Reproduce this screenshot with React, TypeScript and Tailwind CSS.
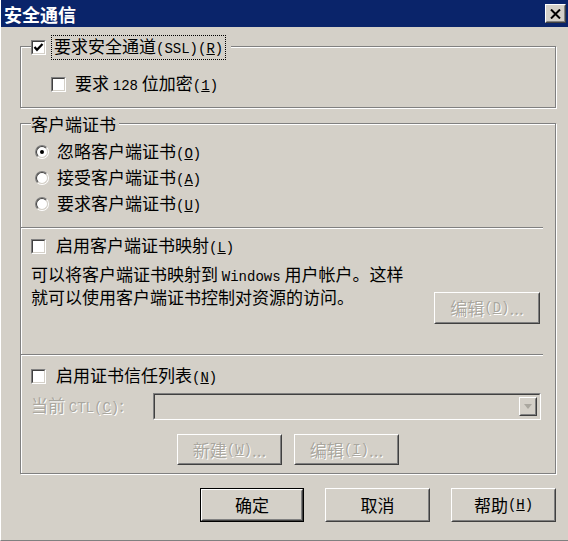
import React from "react";

const cjk = "font-['Noto_Sans_CJK_SC','Noto_Sans',sans-serif]";

function Latin({ children }: { children: React.ReactNode }) {
  return <span className="font-['Liberation_Mono',monospace] text-[14px]">{children}</span>;
}

function Key({ k }: { k: string }) {
  return (
    <Latin>
      (<u>{k}</u>)
    </Latin>
  );
}

function CheckBox({ checked }: { checked?: boolean }) {
  return (
    <span className="inline-block w-[15px] h-[15px] shrink-0 border border-t-[#808080] border-l-[#808080] border-r-white border-b-white">
      <span className="flex items-center justify-center w-full h-full bg-white border border-t-[#404040] border-l-[#404040] border-r-[#d4d0c8] border-b-[#d4d0c8]">
        {checked && (
          <svg width="11" height="11" viewBox="0 0 11 11">
            <path d="M1.5 5 L4 7.8 L9.5 2" fill="none" stroke="#000" strokeWidth="2.2" />
          </svg>
        )}
      </span>
    </span>
  );
}

function Radio({ checked }: { checked?: boolean }) {
  return (
    <span className="inline-block w-[14px] h-[14px] shrink-0 rounded-full border border-t-[#808080] border-l-[#808080] border-r-white border-b-white">
      <span className="flex items-center justify-center w-full h-full rounded-full bg-white border border-t-[#404040] border-l-[#404040] border-r-[#d4d0c8] border-b-[#d4d0c8]">
        {checked && <span className="block w-[4px] h-[4px] rounded-full bg-black" />}
      </span>
    </span>
  );
}

function Btn({
  children,
  className,
  disabled,
}: {
  children: React.ReactNode;
  className: string;
  disabled?: boolean;
}) {
  return (
    <div className={`${className} border border-t-white border-l-white border-r-[#404040] border-b-[#404040] bg-[#d4d0c8]`}>
      <div
        className={`w-full h-full flex items-center justify-center border border-t-[#d4d0c8] border-l-[#d4d0c8] border-r-[#808080] border-b-[#808080] ${
          disabled ? "text-[#aaa79f] [text-shadow:1px_1px_0_#fff]" : "text-black"
        }`}
      >
        {children}
      </div>
    </div>
  );
}

function Etch() {
  return <div className="w-[522px] h-[2px] border-t border-t-[#808080] border-b border-b-white" />;
}

export default function App() {
  return (
    <div className={`w-[568px] h-[541px] bg-[#d4d0c8] border-l border-l-white border-b border-b-[#808080] flex flex-col ${cjk} text-[17px] leading-[20px] text-black overflow-hidden`}>
      {/* title bar */}
      <div className="h-[27px] bg-[#0a246a] flex items-center justify-between pl-[3px] pr-[2px]">
        <span className="text-white font-bold text-[18px] leading-[22px]">安全通信</span>
        <div className="w-[21px] h-[19px] border border-t-white border-l-white border-r-[#404040] border-b-[#404040] bg-[#d4d0c8]">
          <div className="w-full h-full flex items-center justify-center border border-t-[#d4d0c8] border-l-[#d4d0c8] border-r-[#808080] border-b-[#808080]">
            <svg width="11" height="10" viewBox="0 0 11 10">
              <path d="M1 0.5 L10 9.5 M10 0.5 L1 9.5" stroke="#000" strokeWidth="2" />
            </svg>
          </div>
        </div>
      </div>

      <div className="flex flex-col pl-[19px] pr-[12px]">
        {/* group 1 */}
        <div className="relative mt-[19px] h-[62px] border border-[#808080] shadow-[1px_1px_0_#fff,inset_1px_1px_0_#fff]">
          <div className="absolute left-[10px] -top-[12px] h-[24px] flex items-center gap-[5px] bg-[#d4d0c8] pr-[5px]">
            <CheckBox checked />
            <span className="border border-dotted border-black px-[2px] leading-[20px]">
              要求安全通道<Latin>(SSL)</Latin>
              <Key k="R" />
            </span>
          </div>
          <div className="flex items-center gap-[9px] pl-[30px] pt-[26px] h-[48px]">
            <CheckBox />
            <span>
              要求 <Latin>128</Latin> 位加密<Key k="1" />
            </span>
          </div>
        </div>

        {/* group 2 */}
        <div className="relative mt-[15px] h-[351px] border border-[#808080] shadow-[1px_1px_0_#fff,inset_1px_1px_0_#fff] flex flex-col">
          <div className="absolute left-[10px] -top-[11px] h-[22px] flex items-center bg-[#d4d0c8] pr-[3px]">
            <span>客户端证书</span>
          </div>

          <div className="h-[103px] pt-[15px] pl-[14px] flex flex-col">
            <div className="h-[26px] flex items-center gap-[8px]">
              <Radio checked />
              <span>忽略客户端证书<Key k="O" /></span>
            </div>
            <div className="h-[26px] flex items-center gap-[8px]">
              <Radio />
              <span>接受客户端证书<Key k="A" /></span>
            </div>
            <div className="h-[26px] flex items-center gap-[8px]">
              <Radio />
              <span>要求客户端证书<Key k="U" /></span>
            </div>
          </div>
          <Etch />

          <div className="h-[125px] flex flex-col pl-[10px] pr-[15px]">
            <div className="mt-[7px] h-[20px] flex items-center gap-[10px]">
              <CheckBox />
              <span>启用客户端证书映射<Key k="L" /></span>
            </div>
            <div className="mt-[8px] flex items-start justify-between">
              <p className="leading-[20px]">
                可以将客户端证书映射到 <Latin>Windows</Latin> 用户帐户。这样
                <br />
                就可以使用客户端证书控制对资源的访问。
              </p>
              <Btn className="w-[106px] h-[32px] mt-[28px]" disabled>
                编辑<Key k="D" />...
              </Btn>
            </div>
          </div>
          <Etch />

          <div className="flex flex-col pl-[10px]">
            <div className="mt-[10px] h-[20px] flex items-center gap-[10px]">
              <CheckBox />
              <span>启用证书信任列表<Key k="N" /></span>
            </div>
            <div className="mt-[7px] h-[27px] flex items-center justify-between pr-[14px]">
              <span className="text-[#aaa79f] [text-shadow:1px_1px_0_#fff]">
                当前 <Latin>CTL</Latin>
                <Key k="C" />:
              </span>
              <div className="w-[388px] h-[27px] border border-t-[#808080] border-l-[#808080] border-r-white border-b-white">
                <div className="w-full h-full flex items-center justify-end pr-[2px] border border-t-[#404040] border-l-[#404040] border-r-[#d4d0c8] border-b-[#d4d0c8]">
                  <div className="w-[18px] h-[19px] border border-t-white border-l-white border-r-[#404040] border-b-[#404040]">
                    <div className="w-full h-full flex items-center justify-center border border-t-[#d4d0c8] border-l-[#d4d0c8] border-r-[#808080] border-b-[#808080]">
                      <svg width="8" height="5" viewBox="0 0 8 5">
                        <path d="M0 0 H8 L4 5 Z" fill="#aaa79f" />
                      </svg>
                    </div>
                  </div>
                </div>
              </div>
            </div>
            <div className="mt-[14px] flex justify-center gap-[12px] pr-[10px]">
              <Btn className="w-[105px] h-[31px]" disabled>
                新建<Key k="W" />...
              </Btn>
              <Btn className="w-[105px] h-[31px]" disabled>
                编辑<Key k="I" />...
              </Btn>
            </div>
          </div>
        </div>

        {/* bottom buttons */}
        <div className="mt-[14px] flex justify-end gap-[21px]">
          <div className="w-[104px] h-[34px] border border-black">
            <Btn className="w-full h-full">确定</Btn>
          </div>
          <Btn className="w-[105px] h-[34px]">取消</Btn>
          <Btn className="w-[105px] h-[34px]">
            帮助<Key k="H" />
          </Btn>
        </div>
      </div>
    </div>
  );
}
